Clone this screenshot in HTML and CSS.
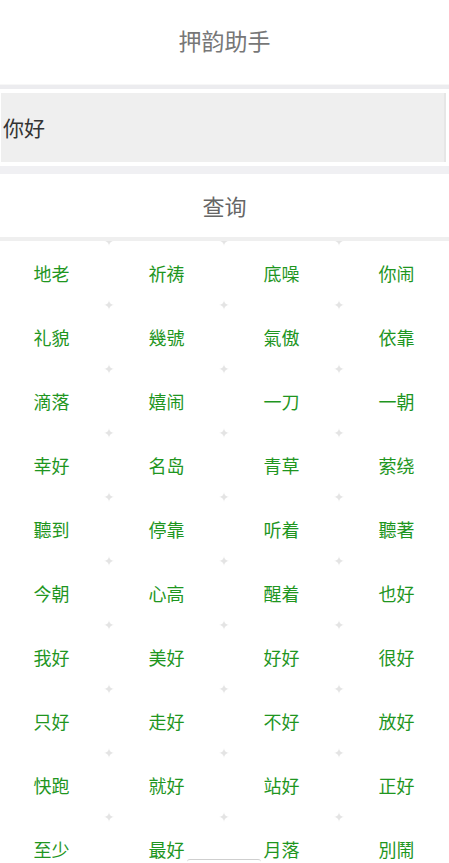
FILE: index.html
```html
<!DOCTYPE html>
<html lang="zh">

<head>
    <meta charset="UTF-8">
    <meta name="viewport" content="width=device-width, initial-scale=1.0">
    <title>押韵助手</title>
    <link rel="stylesheet" href="styles.css">
</head>

<body>
    <div class="header">押韵助手</div>

    <div class="search-box">
        <div class="search-input">你好</div>
    </div>

    <div class="search-button">查询</div>

    <div class="word-grid">
        <div class="word">地老</div>
        <div class="word">祈祷</div>
        <div class="word">底噪</div>
        <div class="word">你闹</div>
        <div class="word">礼貌</div>
        <div class="word">幾號</div>
        <div class="word">氣傲</div>
        <div class="word">依靠</div>
        <div class="word">滴落</div>
        <div class="word">嬉闹</div>
        <div class="word">一刀</div>
        <div class="word">一朝</div>
        <div class="word">幸好</div>
        <div class="word">名岛</div>
        <div class="word">青草</div>
        <div class="word">萦绕</div>
        <div class="word">聽到</div>
        <div class="word">停靠</div>
        <div class="word">听着</div>
        <div class="word">聽著</div>
        <div class="word">今朝</div>
        <div class="word">心高</div>
        <div class="word">醒着</div>
        <div class="word">也好</div>
        <div class="word">我好</div>
        <div class="word">美好</div>
        <div class="word">好好</div>
        <div class="word">很好</div>
        <div class="word">只好</div>
        <div class="word">走好</div>
        <div class="word">不好</div>
        <div class="word">放好</div>
        <div class="word">快跑</div>
        <div class="word">就好</div>
        <div class="word">站好</div>
        <div class="word">正好</div>
        <div class="word">至少</div>
        <div class="word">最好</div>
        <div class="word">月落</div>
        <div class="word">別鬧</div>
    </div>

    <div class="scroll-hint"></div>
</body>

</html>
```

FILE: styles.css
```css
/* page */
body {
    margin: 0;
    padding: 0;
    background-color: #fff;
    font-family: "Noto Sans CJK SC", "Noto Sans", sans-serif;
    overflow: hidden;
}

/* title bar */
.header {
    height: 84px;
    line-height: 80px;
    text-align: center;
    font-size: 23px;
    color: #777;
    border-bottom: 1px solid #f7f7f7;
}

/* input area */
.search-box {
    border-top: 4px solid #ececef;
    border-bottom: 8px solid #f0f0f3;
    padding: 4px 3px 4px 1px;
}

.search-input {
    height: 69px;
    line-height: 69px;
    background-color: #efefef;
    border-right: 2px solid #e6e6e6;
    padding-left: 2px;
    font-size: 21px;
    color: #333;
}

/* query button */
.search-button {
    height: 63px;
    line-height: 63px;
    text-align: center;
    font-size: 22px;
    color: #666;
    border-bottom: 4px solid #efefef;
}

/* result words */
.word-grid {
    display: grid;
    grid-template-columns: repeat(4, 115px);
    grid-auto-rows: 64px;
    width: 460px;
    margin-left: -6px;
    background-color: #e4e4e4;
}

.word {
    background-color: #fff;
    border-radius: 5px;
    display: flex;
    align-items: center;
    justify-content: center;
    font-size: 18px;
    color: #1f961f;
}

/* bottom indicator */
.scroll-hint {
    position: fixed;
    bottom: 0;
    left: 187px;
    width: 74px;
    height: 3px;
    border-top: 1px solid #cfcfcf;
    border-radius: 3px 3px 0 0;
    background-color: #fff;
}
```
